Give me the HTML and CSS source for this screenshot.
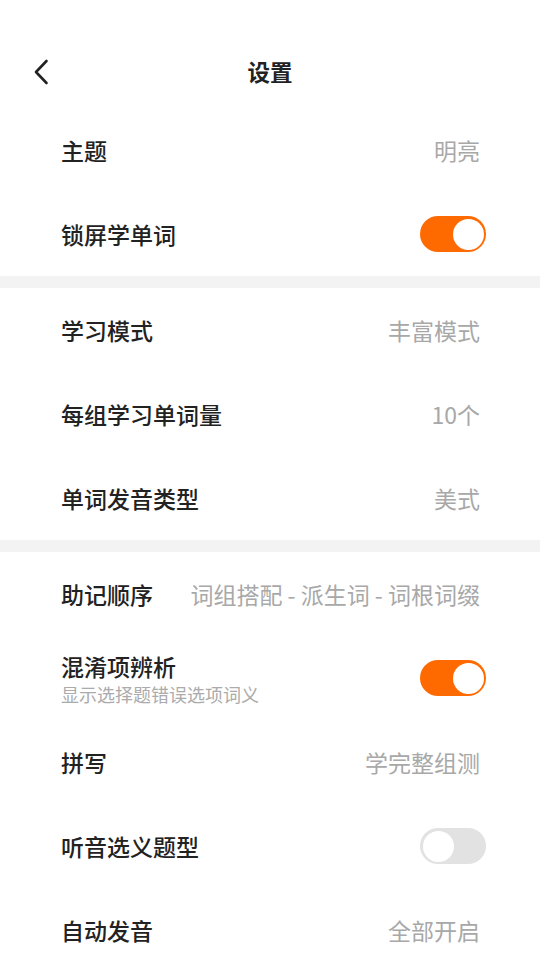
FILE: index.html
```html
<!DOCTYPE html>
<html lang="zh-CN">
<head>
    <meta charset="UTF-8">
    <meta name="viewport" content="width=device-width, initial-scale=1.0">
    <title>设置</title>
    <link rel="stylesheet" href="styles.css">
</head>
<body>
    <div class="page">
        <!-- Barra de título -->
        <div class="topbar">
            <span class="back">
                <svg width="16" height="26" viewBox="0 0 16 26">
                    <path d="M13.5 2 L3 13 L13.5 24" fill="none" stroke="#222" stroke-width="2.6" stroke-linecap="round" stroke-linejoin="round"/>
                </svg>
            </span>
            <h1 class="title">设置</h1>
        </div>

        <div class="group">
            <div class="row">
                <span class="label">主题</span>
                <span class="value">明亮</span>
            </div>
            <div class="row">
                <span class="label">锁屏学单词</span>
                <span class="switch on"></span>
            </div>
        </div>

        <div class="gap"></div>

        <div class="group">
            <div class="row">
                <span class="label">学习模式</span>
                <span class="value">丰富模式</span>
            </div>
            <div class="row">
                <span class="label">每组学习单词量</span>
                <span class="value">10个</span>
            </div>
            <div class="row">
                <span class="label">单词发音类型</span>
                <span class="value">美式</span>
            </div>
        </div>

        <div class="gap"></div>

        <div class="group">
            <div class="row">
                <span class="label">助记顺序</span>
                <span class="value">词组搭配 - 派生词 - 词根词缀</span>
            </div>
            <div class="row">
                <div class="text">
                    <span class="label">混淆项辨析</span>
                    <span class="sub">显示选择题错误选项词义</span>
                </div>
                <span class="switch on"></span>
            </div>
            <div class="row">
                <span class="label">拼写</span>
                <span class="value">学完整组测</span>
            </div>
            <div class="row">
                <span class="label">听音选义题型</span>
                <span class="switch"></span>
            </div>
            <div class="row">
                <span class="label">自动发音</span>
                <span class="value">全部开启</span>
            </div>
        </div>
    </div>
</body>
</html>
```

FILE: styles.css
```css
body {
    margin: 0;
    background-color: #fff;
    font-family: "Noto Sans CJK SC", "Noto Sans", sans-serif;
    color: #222;
}
.page {
    width: 540px;
    height: 960px;
    overflow: hidden;
}
.topbar {
    display: flex;
    align-items: center;
    justify-content: center;
    height: 74px;
    margin-top: 34px;
    position: relative;
}
.back {
    position: absolute;
    left: 33px;
    top: 25px;
    display: flex;
}
.title {
    margin: 0;
    font-size: 22.5px;
    font-weight: 700;
    color: #222;
}
.group {
    display: flex;
    flex-direction: column;
}
.row {
    display: flex;
    align-items: center;
    justify-content: space-between;
    height: 84px;
    padding: 0 54px 0 61px;
}
.label {
    font-size: 23px;
    font-weight: 500;
    color: #222;
}
.value {
    font-size: 23px;
    color: #a8a8a8;
    margin-right: 6px;
}
.text {
    display: flex;
    flex-direction: column;
    padding-top: 2px;
}
.text .label {
    line-height: 31px;
}
.sub {
    font-size: 18px;
    line-height: 25px;
    color: #ababab;
}
.gap {
    height: 12px;
    background-color: #f3f3f3;
}
.switch {
    position: relative;
    width: 66px;
    height: 36px;
    border-radius: 18px;
    background-color: #e2e2e2;
}
.switch::after {
    content: "";
    position: absolute;
    top: 2.5px;
    left: 2.5px;
    width: 31px;
    height: 31px;
    border-radius: 50%;
    background-color: #fff;
}
.switch.on {
    background-color: #ff6a00;
}
.switch.on::after {
    left: auto;
    right: 2.5px;
}
```
